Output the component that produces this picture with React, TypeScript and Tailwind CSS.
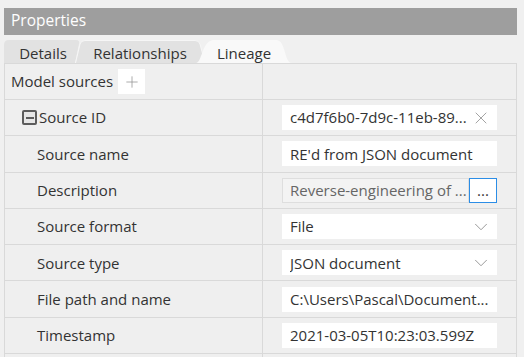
import { ChevronDown, X, Plus } from "lucide-react";

const rows = [
  { label: "Source name", kind: "text", value: "RE'd from JSON document" },
  { label: "Description", kind: "memo", value: "Reverse-engineering of ..." },
  { label: "Source format", kind: "select", value: "File" },
  { label: "Source type", kind: "select", value: "JSON document" },
  { label: "File path and name", kind: "text", value: "C:\\Users\\Pascal\\Document..." },
  { label: "Timestamp", kind: "text", value: "2021-03-05T10:23:03.599Z" },
];

function Tab({ label, width, path, fill, stroke, className }: { label: string; width: number; path: string; fill: string; stroke?: string; className?: string }) {
  return (
    <div className={`relative h-[23px] flex items-center justify-center ${className ?? ""}`} style={{ width }}>
      <svg className="absolute inset-0" width={width} height={23} viewBox={`0 0 ${width} 23`}>
        <path d={path} fill={fill} stroke={stroke ?? "none"} strokeWidth={1} />
      </svg>
      <span className="relative pt-[3px]">{label}</span>
    </div>
  );
}

function Field({ kind, value }: { kind: string; value: string }) {
  if (kind === "memo") {
    return (
      <div className="flex h-[25px] w-full">
        <div className="flex-1 h-full border border-[#dedede] bg-[#f3f3f3] pl-[7px] flex items-center text-[#666] overflow-hidden whitespace-nowrap">
          {value}
        </div>
        <div className="w-[28px] h-full border border-[#2b8de6] bg-white flex items-center justify-center text-[#333] leading-none">
          ...
        </div>
      </div>
    );
  }
  return (
    <div className="flex h-[25px] w-full items-center bg-white pl-2 pr-[5px]">
      <span className="flex-1 whitespace-nowrap overflow-hidden">{value}</span>
      {kind === "select" && <ChevronDown size={22} strokeWidth={1} className="text-[#909090]" />}
      {kind === "id" && <X size={20} strokeWidth={1} className="text-[#909090] mr-[1px]" />}
    </div>
  );
}

export default function App() {
  return (
    <div className="w-[524px] h-[357px] overflow-hidden bg-[#f0f0f0] pt-2 font-['Open_Sans',sans-serif] text-[15px] text-[#333]">
      <div className="ml-1 w-[513px] h-[27px] bg-[#9e9e9e] text-white text-[15.5px] flex items-center pl-[7px] pb-[1px]">
        Properties
      </div>

      <div className="ml-1 mt-[5px] flex">
        <Tab label="Details" width={78} fill="#e2e2e2" path="M0,23 V5 Q0,0 5,0 H72 Q76,0 75,4 L71,23 Z" />
        <Tab
          label="Relationships"
          width={130}
          className="-ml-[7px]"
          fill="#e2e2e2"
          stroke="#f6f6f6"
          path="M0.5,23 L5,4 Q6,0.5 10,0.5 H120 Q124,0.5 125,4 L130,23"
        />
        <Tab
          label="Lineage"
          width={96}
          className="-ml-[9px]"
          fill="#f9f9f9"
          path="M0,23 C6,23 6,0 18,0 H80 C90,0 88,23 96,23 Z"
        />
      </div>

      <div className="ml-1 w-[513px] border-t border-l border-r border-[#d9d9d9] bg-[#efefef]">
        <div className="flex h-[36px] border-b border-[#d9d9d9]">
          <div className="w-[258px] border-r border-[#d9d9d9] flex items-center pl-[6px] gap-[5px]">
            <span>Model sources</span>
            <div className="w-[27px] h-[25px] bg-white flex items-center justify-center">
              <Plus size={18} strokeWidth={1} className="text-[#909090]" />
            </div>
          </div>
          <div className="flex-1" />
        </div>

        <div className="flex h-[36.3px] border-b border-[#d9d9d9]">
          <div className="w-[258px] border-r border-[#d9d9d9] flex items-center pl-[17px] gap-[2px]">
            <div className="w-[15px] h-[15px] rounded-[2px] border-2 border-[#5c5c5c] bg-[#e6e6e6] flex items-center justify-center">
              <div className="w-[8px] h-[2px] bg-[#5c5c5c]" />
            </div>
            <span>Source ID</span>
          </div>
          <div className="flex-1 flex items-center px-[19px]">
            <Field kind="id" value="c4d7f6b0-7d9c-11eb-89..." />
          </div>
        </div>

        {rows.map((r) => (
          <div key={r.label} className="flex h-[36.3px] border-b border-[#d9d9d9]">
            <div className="w-[258px] border-r border-[#d9d9d9] flex items-center pl-[32px]">
              <span>{r.label}</span>
            </div>
            <div className="flex-1 flex items-center px-[19px]">
              <Field kind={r.kind} value={r.value} />
            </div>
          </div>
        ))}

        <div className="flex h-[36px]">
          <div className="w-[258px] border-r border-[#d9d9d9]" />
          <div className="flex-1" />
        </div>
      </div>
    </div>
  );
}
